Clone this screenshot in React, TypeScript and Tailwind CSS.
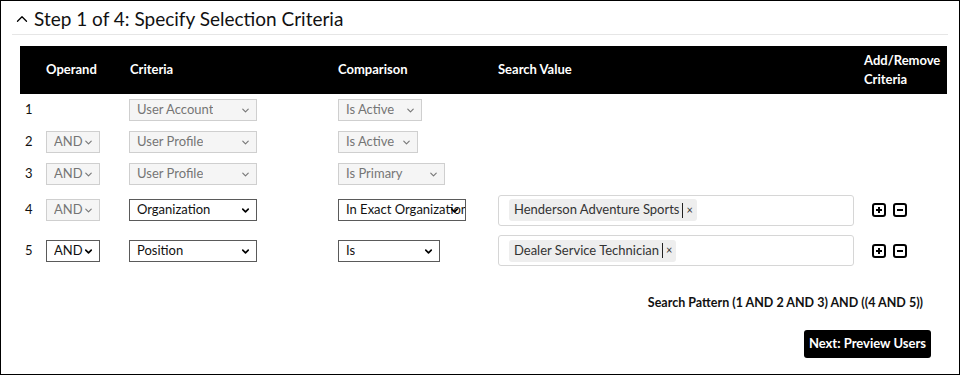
import { ChevronDown, ChevronUp } from "lucide-react";

type Row = {
  n: number;
  op?: { label: string; on: boolean };
  crit: { label: string; on: boolean; w: string };
  comp: { label: string; on: boolean; w: string };
  value?: string;
  h: string;
};

const rows: Row[] = [
  { n: 1, crit: { label: "User Account", on: false, w: "w-[128px]" }, comp: { label: "Is Active", on: false, w: "w-[84px]" }, h: "h-[32px]" },
  { n: 2, op: { label: "AND", on: false }, crit: { label: "User Profile", on: false, w: "w-[128px]" }, comp: { label: "Is Active", on: false, w: "w-[80px]" }, h: "h-[32px]" },
  { n: 3, op: { label: "AND", on: false }, crit: { label: "User Profile", on: false, w: "w-[128px]" }, comp: { label: "Is Primary", on: false, w: "w-[107px]" }, h: "h-[32px]" },
  { n: 4, op: { label: "AND", on: false }, crit: { label: "Organization", on: true, w: "w-[128px]" }, comp: { label: "In Exact Organization", on: true, w: "w-[128px]" }, value: "Henderson Adventure Sports", h: "h-[40px]" },
  { n: 5, op: { label: "AND", on: true }, crit: { label: "Position", on: true, w: "w-[128px]" }, comp: { label: "Is", on: true, w: "w-[102px]" }, value: "Dealer Service Technician", h: "h-[41px]" },
];

const cols = "grid grid-cols-[26px_83px_209px_160px_366px_83px]";

function Select({ label, on, w }: { label: string; on: boolean; w: string }) {
  return (
    <div
      className={`relative flex h-[22px] ${w} items-center overflow-hidden border pl-[7px] text-[13px] whitespace-nowrap ${
        on ? "border-[#5a5a5a] bg-white text-[#111]" : "border-[#cfcfcf] bg-[#f5f5f5] text-[#757575]"
      }`}
    >
      <span className="min-w-0 overflow-hidden">{label}</span>
      <ChevronDown
        size={11}
        strokeWidth={on ? 3.5 : 2.5}
        className={`absolute right-[5px] top-[5px] ${on ? "text-black" : "text-[#777]"}`}
      />
    </div>
  );
}

function BoxIcon({ minus }: { minus?: boolean }) {
  return (
    <svg width="14" height="14" viewBox="0 0 14 14">
      <rect x="1" y="1" width="12" height="12" rx="2" fill="none" stroke="#000" strokeWidth="2" />
      <path d="M4 7h6" stroke="#000" strokeWidth="2" />
      {!minus && <path d="M7 4v6" stroke="#000" strokeWidth="2" />}
    </svg>
  );
}

export default function App() {
  return (
    <div className="h-[375px] w-[960px] border border-black bg-white font-['Lato',sans-serif] text-[#111]">
      <div className="mx-[11px] flex items-center gap-[3px] border-b border-[#e6e6e6] pb-[3px] pt-[6px]">
        <ChevronUp size={18} strokeWidth={1.75} className="ml-[1px] text-black" />
        <h1 className="text-[19px] leading-[24px]">Step 1 of 4: Specify Selection Criteria</h1>
      </div>

      <div className="ml-[19px] mt-[11px] w-[927px]">
        <div className={`${cols} h-[48px] items-center bg-black text-[13px] font-bold text-white`}>
          <div />
          <div>Operand</div>
          <div className="pl-[1px]">Criteria</div>
          <div>Comparison</div>
          <div>Search Value</div>
          <div className="leading-[19px] whitespace-nowrap">
            Add/Remove
            <br />
            Criteria
          </div>
        </div>

        {rows.map((r) => (
          <div key={r.n} className={`${cols} ${r.h} items-center text-[13px]`}>
            <div className="pl-[5px]">{r.n}</div>
            <div>{r.op && <Select label={r.op.label} on={r.op.on} w="w-[54px]" />}</div>
            <div>
              <Select {...r.crit} />
            </div>
            <div>
              <Select {...r.comp} />
            </div>
            <div>
              {r.value && (
                <div className="flex h-[31px] w-[356px] items-center rounded-[3px] border border-[#d6d6d6] px-[10px]">
                  <span className="flex h-[22px] items-center rounded-[3px] bg-[#eeeeee] pl-[5px] pr-[4px] text-[13px] text-[#333]">
                    {r.value}
                    <span className="mx-[3px] h-[15px] w-px bg-[#222]" />
                    <span className="text-[11px]">×</span>
                  </span>
                </div>
              )}
            </div>
            <div>
              {r.value && (
                <div className="flex gap-[7px] pl-[8px]">
                  <BoxIcon />
                  <BoxIcon minus />
                </div>
              )}
            </div>
          </div>
        ))}

        <div className="mt-[23px] pr-[24px] text-right text-[12.5px] font-bold">
          Search Pattern (1 AND 2 AND 3) AND ((4 AND 5))
        </div>
        <div className="mt-[17px] flex justify-end pr-[16px]">
          <button className="h-[28px] rounded-[3px] bg-black px-[5px] text-[13px] font-bold text-white">
            Next: Preview Users
          </button>
        </div>
      </div>
    </div>
  );
}
